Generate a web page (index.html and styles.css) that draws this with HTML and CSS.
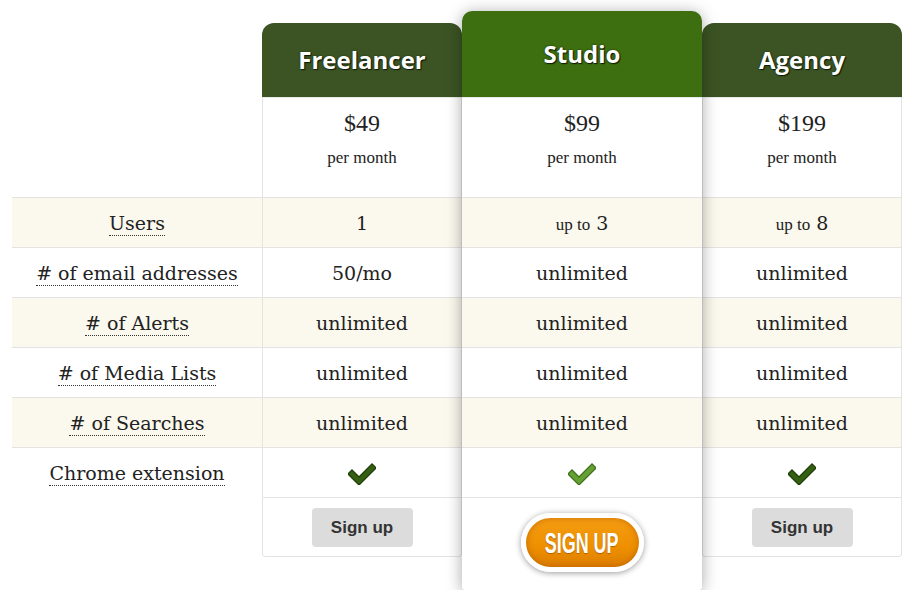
FILE: index.html
```html
<!DOCTYPE html>
<html>
<head>
<meta charset="utf-8">
<title>Pricing</title>
<link rel="stylesheet" href="styles.css">
</head>
<body>
<div class="pricing">
  <div class="col labels">
    <div class="cell alt"><span class="term">Users</span></div>
    <div class="cell"><span class="term"># of email addresses</span></div>
    <div class="cell alt"><span class="term"># of Alerts</span></div>
    <div class="cell"><span class="term"># of Media Lists</span></div>
    <div class="cell alt"><span class="term"># of Searches</span></div>
    <div class="cell"><span class="term">Chrome extension</span></div>
  </div>

  <div class="col plan side">
    <div class="head">Freelancer</div>
    <div class="price"><div class="amount">$49</div><div class="per">per month</div></div>
    <div class="cell alt">1</div>
    <div class="cell">50/mo</div>
    <div class="cell alt">unlimited</div>
    <div class="cell">unlimited</div>
    <div class="cell alt">unlimited</div>
    <div class="cell"><svg class="check" width="28" height="22" viewBox="0 0 28 22"><path d="M4 11 L11 18 L24 5" fill="none" stroke="#1f3d08" stroke-width="7" stroke-linecap="square"/><path d="M4 11 L11 18 L24 5" fill="none" stroke="#355f12" stroke-width="4.5" stroke-linecap="square"/></svg></div>
    <div class="foot"><button class="btn">Sign up</button></div>
  </div>

  <div class="col plan featured">
    <div class="head">Studio</div>
    <div class="price"><div class="amount">$99</div><div class="per">per month</div></div>
    <div class="cell alt"><span class="small">up to</span>&nbsp;3</div>
    <div class="cell">unlimited</div>
    <div class="cell alt">unlimited</div>
    <div class="cell">unlimited</div>
    <div class="cell alt">unlimited</div>
    <div class="cell"><svg class="check" width="28" height="22" viewBox="0 0 28 22"><path d="M4 11 L11 18 L24 5" fill="none" stroke="#3f6f1a" stroke-width="7" stroke-linecap="square"/><path d="M4 11 L11 18 L24 5" fill="none" stroke="#64a033" stroke-width="4.5" stroke-linecap="square"/></svg></div>
    <div class="foot"><button class="cta"><span>SIGN UP</span></button></div>
  </div>

  <div class="col plan side">
    <div class="head">Agency</div>
    <div class="price"><div class="amount">$199</div><div class="per">per month</div></div>
    <div class="cell alt"><span class="small">up to</span>&nbsp;8</div>
    <div class="cell">unlimited</div>
    <div class="cell alt">unlimited</div>
    <div class="cell">unlimited</div>
    <div class="cell alt">unlimited</div>
    <div class="cell"><svg class="check" width="28" height="22" viewBox="0 0 28 22"><path d="M4 11 L11 18 L24 5" fill="none" stroke="#1f3d08" stroke-width="7" stroke-linecap="square"/><path d="M4 11 L11 18 L24 5" fill="none" stroke="#355f12" stroke-width="4.5" stroke-linecap="square"/></svg></div>
    <div class="foot"><button class="btn">Sign up</button></div>
  </div>
</div>
</body>
</html>
```

FILE: styles.css
```css
html, body {
  margin: 0;
  padding: 0;
  background: #fff;
}

body {
  font-family: "DejaVu Serif", serif;
  color: #222;
}

.pricing {
  display: flex;
  align-items: flex-start;
  padding-left: 12px;
}

.col {
  display: flex;
  flex-direction: column;
}

.labels {
  width: 250px;
  margin-top: 197px;
}

.cell {
  height: 50px;
  box-sizing: border-box;
  border-top: 1px solid #e3e3e3;
  display: flex;
  align-items: center;
  justify-content: center;
  font-size: 19px;
  color: #222;
  background: #fff;
}

.cell.alt {
  background: #fbf8ed;
}

.term {
  display: inline-block;
  line-height: 22px;
  border-bottom: 1px dotted #333;
  padding-bottom: 1px;
  margin-top: 2px;
}

.small {
  font-size: 17px;
  font-family: "Liberation Serif", serif;
  margin-top: 4px;
}

.side {
  width: 200px;
  margin-top: 23px;
}

.side .price,
.side .cell,
.side .foot {
  border-left: 1px solid #e3e3e3;
  border-right: 1px solid #e3e3e3;
}

.featured {
  width: 240px;
  margin-top: 11px;
  position: relative;
  z-index: 1;
  background: #fff;
  box-shadow: 0 2px 16px rgba(0, 0, 0, 0.35);
  border-radius: 10px 10px 4px 4px;
}

.head {
  box-sizing: border-box;
  height: 74px;
  display: flex;
  align-items: center;
  justify-content: center;
  border-radius: 12px 12px 0 0;
  background: #3c5424;
  color: #fff;
  font-family: "Open Sans", sans-serif;
  font-weight: 700;
  font-size: 24px;
  text-shadow: 1px 1px 1px #0d1a03, 0 0 2px #1a2a08;
  padding-bottom: 2px;
}

.featured .head {
  height: 86px;
  background: #3d6e10;
  border-radius: 10px 10px 0 0;
  padding-bottom: 2px;
}

.price {
  height: 100px;
  box-sizing: border-box;
  border-top: 1px solid #e9e9e9;
  background: #fff;
  display: flex;
  flex-direction: column;
  align-items: center;
  font-family: "Liberation Serif", serif;
  color: #222;
  padding-top: 11px;
}

.amount {
  font-size: 24px;
  line-height: 28px;
}

.per {
  font-size: 17px;
  line-height: 20px;
  margin-top: 11px;
}

.check {
  display: block;
  margin-top: 2px;
}

.foot {
  height: 60px;
  box-sizing: border-box;
  border-top: 1px solid #e3e3e3;
  border-bottom: 1px solid #e3e3e3;
  border-radius: 0 0 3px 3px;
  background: #fff;
  display: flex;
  justify-content: center;
  padding-top: 10px;
}

.btn {
  width: 101px;
  height: 39px;
  border: none;
  border-radius: 4px;
  background: #dcdcdc;
  color: #333;
  font-family: "Liberation Sans", sans-serif;
  font-weight: 700;
  font-size: 17px;
  padding: 0;
}

.featured .foot {
  height: 93px;
  border: none;
  border-top: 1px solid #e3e3e3;
  border-radius: 0 0 4px 4px;
  padding-top: 15px;
}

.cta {
  width: 123px;
  height: 59px;
  box-sizing: border-box;
  border: 5px solid #fff;
  border-radius: 30px;
  background: linear-gradient(#f59d12, #ee8f00 60%, #dc7e00);
  box-shadow: 0 1px 6px rgba(0, 0, 0, 0.4), inset 0 0 6px rgba(170, 80, 0, 0.6);
  padding: 0;
  display: flex;
  align-items: center;
  justify-content: center;
  overflow: hidden;
}

.cta span {
  display: inline-block;
  color: #fff;
  font-family: "Liberation Sans", sans-serif;
  font-weight: 700;
  font-size: 29px;
  line-height: 30px;
  transform: scaleX(0.62);
  text-shadow: 0 1px 1px rgba(120, 60, 0, 0.5);
  white-space: nowrap;
}
```
